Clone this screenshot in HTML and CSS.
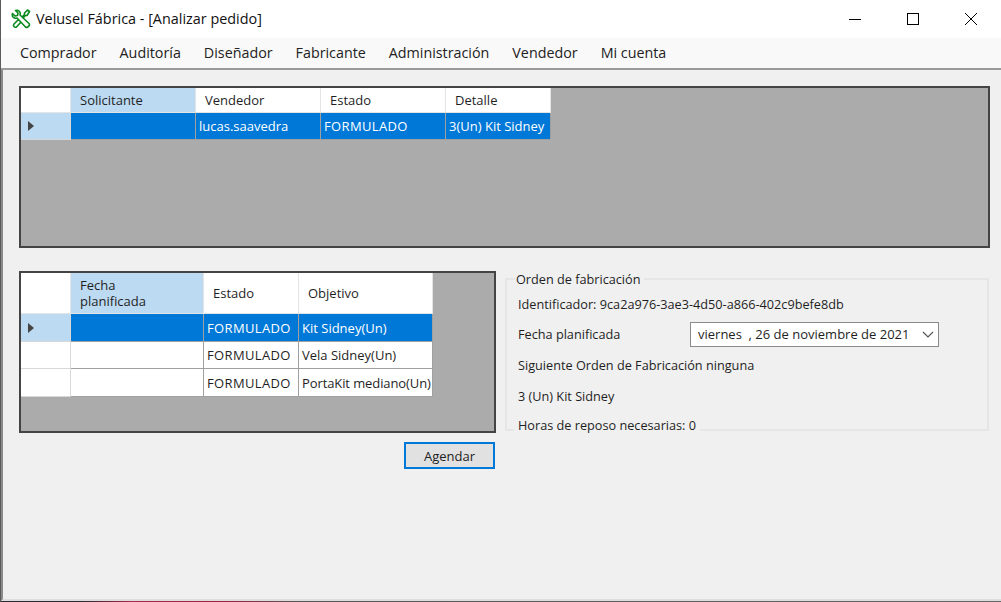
FILE: index.html
```html
<!DOCTYPE html>
<html lang="es">
<head>
    <meta charset="UTF-8">
    <title>Velusel Fábrica - [Analizar pedido]</title>
    <link rel="stylesheet" href="styles.css">
</head>
<body>
    <div class="window">
        <div class="titlebar">
            <svg class="app-icon" viewBox="0 0 20 20" width="20" height="20">
                <path d="M18.5 2.5 L16.5 1 L13.5 4 L13.5 5.5 L10.5 8.5 L11.5 9.5 L14.5 6.5 L16 6.5 Z" fill="#fff" stroke="#0a8a1e" stroke-width="1.6" stroke-linejoin="round"/>
                <path d="M8 10 L3 15 C1.5 16.5 3.5 19 5.5 18 L10.5 12.5 Z" fill="#fff" stroke="#0a8a1e" stroke-width="1.6" stroke-linejoin="round"/>
                <path d="M1.5 4.5 L4 7 L6.5 6.5 L7 4 L4.5 1.5 C7.5 0.5 10 3 9 6 L18 14.5 C19.5 16 16.5 19.5 14.5 18 L6 9 C3 10 0.5 7.5 1.5 4.5 Z" fill="#fff" stroke="#0a8a1e" stroke-width="1.6" stroke-linejoin="round"/>
            </svg>
            <span class="title">Velusel Fábrica - [Analizar pedido]</span>
            <div class="win-buttons">
                <svg class="win-btn" viewBox="0 0 12 12" width="12" height="12"><path d="M0 6.5 H12" stroke="#000" fill="none"/></svg>
                <svg class="win-btn" viewBox="0 0 12 12" width="12" height="12"><rect x="0.5" y="0.5" width="11" height="11" stroke="#000" fill="none"/></svg>
                <svg class="win-btn" viewBox="0 0 12 12" width="12" height="12"><path d="M0 0 L12 12 M12 0 L0 12" stroke="#000" fill="none"/></svg>
            </div>
        </div>
        <div class="menubar">
            <span class="menu-item">Comprador</span>
            <span class="menu-item">Auditoría</span>
            <span class="menu-item">Diseñador</span>
            <span class="menu-item">Fabricante</span>
            <span class="menu-item">Administración</span>
            <span class="menu-item">Vendedor</span>
            <span class="menu-item">Mi cuenta</span>
        </div>
        <div class="content">
            <div class="panel panel-top">
                <div class="grid grid-pedidos">
                    <div class="cell head"></div>
                    <div class="cell head head-sel">Solicitante</div>
                    <div class="cell head">Vendedor</div>
                    <div class="cell head">Estado</div>
                    <div class="cell head">Detalle</div>

                    <div class="cell rowhead rowhead-sel"><span class="arrow"></span></div>
                    <div class="cell sel"></div>
                    <div class="cell sel">lucas.saavedra</div>
                    <div class="cell sel estado">FORMULADO</div>
                    <div class="cell sel">3(Un) Kit Sidney</div>
                </div>
            </div>
            <div class="lower">
                <div class="lower-left">
                    <div class="panel panel-bottom">
                        <div class="grid grid-ordenes">
                            <div class="cell head"></div>
                            <div class="cell head head-sel">Fecha<br>planificada</div>
                            <div class="cell head">Estado</div>
                            <div class="cell head">Objetivo</div>

                            <div class="cell rowhead rowhead-sel"><span class="arrow"></span></div>
                            <div class="cell sel"></div>
                            <div class="cell sel estado">FORMULADO</div>
                            <div class="cell sel">Kit Sidney(Un)</div>

                            <div class="cell rowhead"></div>
                            <div class="cell"></div>
                            <div class="cell estado">FORMULADO</div>
                            <div class="cell">Vela Sidney(Un)</div>

                            <div class="cell rowhead"></div>
                            <div class="cell"></div>
                            <div class="cell estado">FORMULADO</div>
                            <div class="cell objetivo-largo">PortaKit mediano(Un)</div>
                        </div>
                    </div>
                    <button class="btn-agendar" type="button">Agendar</button>
                </div>
                <fieldset class="group">
                    <legend class="group-title">Orden de fabricación</legend>
                    <div class="field field-id">Identificador: 9ca2a976-3ae3-4d50-a866-402c9befe8db</div>
                    <div class="field field-date">
                        <span class="date-label">Fecha planificada</span>
                        <div class="datepicker">
                            <span>viernes&nbsp; , 26 de noviembre de 2021</span>
                            <svg viewBox="0 0 12 7" width="12" height="7"><path d="M1 1 L6 6 L11 1" stroke="#555" stroke-width="1.2" fill="none"/></svg>
                        </div>
                    </div>
                    <div class="field">Siguiente Orden de Fabricación ninguna</div>
                    <div class="field">3 (Un) Kit Sidney</div>
                    <div class="field field-last">Horas de reposo necesarias: 0</div>
                </fieldset>
            </div>
        </div>
        <div class="desktop-strip"></div>
    </div>
</body>
</html>
```

FILE: styles.css
```css
html, body {
    margin: 0;
    height: 100%;
    overflow: hidden;
}
body {
    background: #f0f0f0;
    font-family: "Open Sans", "Noto Sans", sans-serif;
    font-size: 13px;
    color: #1f1f1f;
}
.window {
    height: 602px;
    border-left: 1px solid #5a5a5a;
    display: flex;
    flex-direction: column;
}

/* title bar */
.titlebar {
    height: 37px;
    padding-bottom: 1px;
    background: #fff;
    display: flex;
    align-items: center;
    padding-left: 10px;
    flex-shrink: 0;
}
.app-icon {
    margin-right: 5px;
}
.title {
    font-size: 14.4px;
    color: #111;
}
.win-buttons {
    margin-left: auto;
    display: flex;
    gap: 46px;
    padding-right: 24px;
}

/* menu */
.menubar {
    height: 28px;
    padding-bottom: 2px;
    background: #f9f9f9;
    border-bottom: 2px solid #9a9a9a;
    display: flex;
    align-items: center;
    gap: 23px;
    padding-left: 19px;
    flex-shrink: 0;
    font-size: 14.3px;
    color: #222;
}

.content {
    flex: 1;
    border-left: 2px solid #8a8a8a;
    border-bottom: 2px solid #dedede;
    padding: 16px 11px 0 16px;
}
.desktop-strip {
    height: 1px;
    flex-shrink: 0;
    background: linear-gradient(90deg, #2a2a30 0, #2a2a30 8%, #a8284a 13%, #a02040 22%, #555 30%, #666 100%);
}

/* data grids */
.panel {
    background: #ababab;
    border: 2px solid #444;
    box-sizing: border-box;
}
.panel-top {
    height: 162px;
}
.panel-bottom {
    height: 162px;
    width: 477px;
}
.grid {
    display: grid;
    width: max-content;
}
.grid-pedidos {
    grid-template-columns: 50px 125px 125px 125px 105px;
    grid-template-rows: 25px 27px;
}
.grid-ordenes {
    grid-template-columns: 50px 133px 95px 134px;
    grid-template-rows: 41px 28px 27px 28px;
}
.cell {
    box-sizing: border-box;
    background: #fff;
    border-right: 1px solid #a0a0a0;
    border-bottom: 1px solid #a0a0a0;
    padding-left: 3px;
    display: flex;
    align-items: center;
    white-space: nowrap;
    overflow: hidden;
}
.estado {
    letter-spacing: 0.35px;
}
.objetivo-largo {
    letter-spacing: -0.1px;
}
.head {
    border-color: #e4e4e4;
    padding-left: 9px;
}
.head-sel {
    background: #bcdaf2;
    line-height: 16px;
}
.sel {
    background: #0078d7;
    color: #fff;
}
.rowhead {
    border-color: #d8d8d8;
    padding-left: 7px;
}
.rowhead-sel {
    background: #bcdaf2;
}
.arrow {
    width: 0;
    height: 0;
    border-left: 6px solid #444;
    border-top: 5px solid transparent;
    border-bottom: 5px solid transparent;
}

/* lower area */
.lower {
    display: flex;
    gap: 9px;
    margin-top: 23px;
}
.lower-left {
    display: flex;
    flex-direction: column;
    align-items: flex-end;
}
.btn-agendar {
    width: 91px;
    height: 27px;
    margin: 9px 1px 0 0;
    background: #e1e1e1;
    border: 2px solid #0078d7;
    font: inherit;
    color: #222;
    padding: 0;
}

/* group box */
.group {
    width: 484px;
    height: 160px;
    box-sizing: border-box;
    margin: 0;
    padding: 8px 0 0 11px;
    border: 2px solid #e6e6e6;
    font-size: 12.7px;
}
.group-title {
    padding: 0 3px 0 1px;
    margin-left: -3px;
    line-height: 16px;
}
.field {
    height: 18px;
    line-height: 18px;
    margin-bottom: 13px;
    white-space: nowrap;
}
.field-id {
    margin-bottom: 12px;
}
.field-date {
    display: flex;
    align-items: center;
}
.date-label {
    width: 172px;
}
.datepicker {
    width: 249px;
    height: 25px;
    flex-shrink: 0;
    box-sizing: border-box;
    background: #fff;
    border: 1px solid #8a8a8a;
    display: flex;
    align-items: center;
    justify-content: space-between;
    padding: 0 4px 0 7px;
    font-size: 13px;
}
.field-last {
    width: fit-content;
    background: #f0f0f0;
    margin: -2px 0 0 -4px;
    padding: 0 4px;
}
```
